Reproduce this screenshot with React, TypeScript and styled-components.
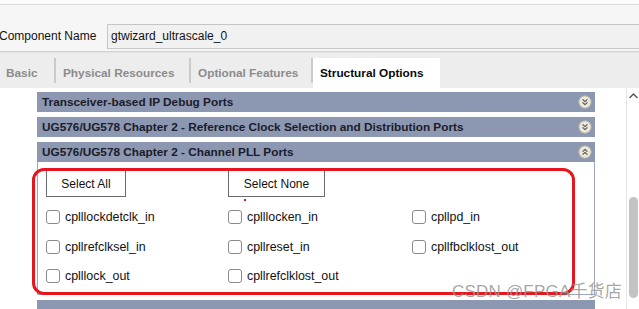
import React from "react";
import styled, { createGlobalStyle } from "styled-components";

const Global = createGlobalStyle`
  html, body { margin: 0; padding: 0; background: #ffffff; }
  body { font-family: "Liberation Sans", Arial, sans-serif; }
`;

const Page = styled.div`
  position: relative;
  width: 639px;
  height: 309px;
  overflow: hidden;
  background: #ffffff;
  font-family: "Liberation Sans", Arial, sans-serif;
  font-size: 12px;
  color: #000;
`;

const TopStrip = styled.div`
  height: 4px;
  background: #fbfbfb;
  border-bottom: 1px solid #dadada;
`;

const NameRow = styled.div`
  height: 47px;
  background: #f6f6f6;
  display: flex;
  align-items: flex-start;
  padding-top: 19px;
  box-sizing: border-box;
  border-bottom: 1px solid #d2d2d2;
`;

const NameLabel = styled.label`
  width: 108px;
  margin-left: -1px;
  line-height: 25px;
  font-size: 12px;
  color: #111;
  white-space: nowrap;
`;

const NameInput = styled.div`
  flex: 1;
  height: 25px;
  box-sizing: border-box;
  border: 1px solid #c6c6c6;
  border-right: none;
  background: #f1f1f1;
  padding-left: 3px;
  line-height: 23px;
  color: #111;
`;

const TabBar = styled.div`
  height: 36px;
  background: #ededed;
  border-top: 1px solid #e4e4e4;
  box-sizing: border-box;
  display: flex;
  align-items: flex-end;
`;

const Tab = styled.div<{ $active?: boolean; $w: number; $first?: boolean }>`
  width: ${(p) => p.$w}px;
  height: 30px;
  box-sizing: border-box;
  padding-left: ${(p) => (p.$first ? 6 : 7)}px;
  display: flex;
  align-items: center;
  font-weight: bold;
  font-size: 11.8px;
  white-space: nowrap;
  color: ${(p) => (p.$active ? "#0a0a0a" : "#8b8b8b")};
  background: ${(p) => (p.$active ? "#ffffff" : "transparent")};
  position: relative;
  &::after {
    content: "";
    display: ${(p) => (p.$active ? "none" : "block")};
    position: absolute;
    right: 0;
    top: 0;
    width: 2px;
    height: 25px;
    background: #cbcbcb;
  }
`;

const Body = styled.div`
  display: flex;
  height: 221px;
`;

const Scroller = styled.div`
  flex: 1;
  padding: 4px 31px 0 37px;
  display: flex;
  flex-direction: column;
  gap: 5px;
  overflow: hidden;
`;

const Header = styled.div`
  height: 20px;
  flex: none;
  background: #8c98b2;
  display: flex;
  align-items: center;
  justify-content: space-between;
  padding: 0 3px 0 5px;
  font-weight: bold;
  font-size: 11.8px;
  color: #1b1b29;
  white-space: nowrap;
`;

const Section = styled.div`
  display: flex;
  flex-direction: column;
  flex: none;
`;

const SectionBody = styled.div`
  border: 1px solid #9ea6bd;
  border-top: none;
  height: 133px;
  box-sizing: border-box;
  padding: 8px 0 0 8px;
  display: grid;
  grid-template-columns: 182px 184px 1fr;
  grid-template-rows: 27px 27px 30px 29px;
  align-items: center;
`;

const Button = styled.button<{ $w: number }>`
  width: ${(p) => p.$w}px;
  height: 27px;
  border: 1px solid #6b6b6b;
  background: #ffffff;
  font-family: "Liberation Sans", Arial, sans-serif;
  font-size: 12px;
  color: #111;
  padding: 0;
  align-self: start;
`;

const CheckItem = styled.label`
  display: flex;
  align-items: center;
  gap: 5px;
  font-size: 12.4px;
  color: #111;
  white-space: nowrap;
  align-self: end;
`;

const Box = styled.span`
  width: 14px;
  height: 14px;
  box-sizing: border-box;
  border: 1px solid #8a8a8a;
  border-radius: 3px;
  background: #fff;
  flex: none;
`;

const ScrollBar = styled.div`
  width: 13px;
  border-left: 1px solid #e6e6e6;
  background: #fff;
  display: flex;
  flex-direction: column;
  align-items: center;
  padding-top: 5px;
  box-sizing: border-box;
`;

const Thumb = styled.div`
  width: 9px;
  height: 101px;
  border-radius: 5px;
  background: #c3c3c3;
  margin-top: 98px;
`;

const Annotation = styled.div`
  position: absolute;
  left: 32px;
  top: 168px;
  width: 543px;
  height: 127px;
  box-sizing: border-box;
  border: 3px solid #e5161e;
  border-radius: 12px;
  pointer-events: none;
`;

const Dot = styled.div`
  position: absolute;
  left: 244px;
  top: 199px;
  width: 2px;
  height: 2px;
  background: #e5161e;
`;

const Watermark = styled.div`
  position: absolute;
  left: 452px;
  top: 277px;
  font-family: "Liberation Sans", "Noto Sans CJK SC", sans-serif;
  font-size: 17px;
  letter-spacing: 0.2px;
  color: rgba(150, 150, 150, 0.85);
  white-space: nowrap;
  pointer-events: none;
`;

const Toggle = ({ up }: { up?: boolean }) => (
  <svg width="14" height="14" viewBox="0 0 14 14">
    <circle cx="7" cy="7" r="6.2" fill="#ebe7da" stroke="#b5b0a2" strokeWidth="1" />
    <g
      fill="none"
      stroke="#4a4a4a"
      strokeWidth="1.1"
      transform={up ? "rotate(180 7 7)" : undefined}
    >
      <polyline points="4.6,4.4 7,6.6 9.4,4.4" />
      <polyline points="4.6,7.4 7,9.6 9.4,7.4" />
    </g>
  </svg>
);

const Caret = () => (
  <svg width="9" height="6" viewBox="0 0 9 6">
    <polyline points="0.5,5 4.5,1 8.5,5" fill="none" stroke="#555" strokeWidth="1.4" />
  </svg>
);

const items = [
  "cplllockdetclk_in",
  "cplllocken_in",
  "cpllpd_in",
  "cpllrefclksel_in",
  "cpllreset_in",
  "cpllfbclklost_out",
  "cplllock_out",
  "cpllrefclklost_out",
];

export default function App() {
  return (
    <Page>
      <Global />
      <TopStrip />
      <NameRow>
        <NameLabel>Component Name</NameLabel>
        <NameInput>gtwizard_ultrascale_0</NameInput>
      </NameRow>
      <TabBar>
        <Tab $first $w={56}>Basic</Tab>
        <Tab $w={135}>Physical Resources</Tab>
        <Tab $w={122}>Optional Features</Tab>
        <Tab $active $w={127}>Structural Options</Tab>
      </TabBar>
      <Body>
        <Scroller>
          <Header>
            Transceiver-based IP Debug Ports
            <Toggle />
          </Header>
          <Header>
            UG576/UG578 Chapter 2 - Reference Clock Selection and Distribution Ports
            <Toggle />
          </Header>
          <Section>
            <Header>
              UG576/UG578 Chapter 2 - Channel PLL Ports
              <Toggle up />
            </Header>
            <SectionBody>
              <Button $w={80}>Select All</Button>
              <Button $w={97}>Select None</Button>
              <span />
              {items.map((t) => (
                <CheckItem key={t}>
                  <Box />
                  {t}
                </CheckItem>
              ))}
            </SectionBody>
          </Section>
          <Header />
        </Scroller>
        <ScrollBar>
          <Caret />
          <Thumb />
        </ScrollBar>
      </Body>
      <Annotation />
      <Dot />
      <Watermark>CSDN @FPGA千货店</Watermark>
    </Page>
  );
}
